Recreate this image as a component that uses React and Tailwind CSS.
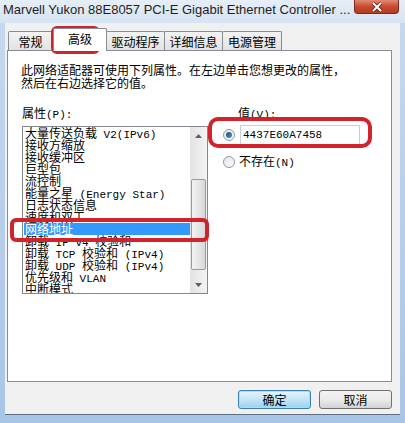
import React from "react"

const items = [
  "大量传送负载 V2(IPv6)",
  "接收方缩放",
  "接收缓冲区",
  "巨型包",
  "流控制",
  "能量之星 (Energy Star)",
  "日志状态信息",
  "速度和双工",
  "网络地址",
  "卸载 IP v4 校验和",
  "卸载 TCP 校验和 (IPv4)",
  "卸载 UDP 校验和 (IPv4)",
  "优先级和 VLAN",
  "中断模式",
]

// ascii runs get the narrow mono face, like SimSun's half-width latin
function Mixed({ text }) {
  return text.split(/([\x20-\x7e]+)/).map((part, i) =>
    /^[\x20-\x7e]+$/.test(part) ? (
      <span key={i} className="font-['Liberation_Mono',monospace] text-[11px] whitespace-pre">
        {part}
      </span>
    ) : (
      <span key={i}>{part}</span>
    )
  )
}

function Tab({ label, width, selected }) {
  if (selected) {
    return (
      <div
        className="h-[23px] -mb-px relative z-10 flex items-center justify-center bg-white border border-b-0 border-[#898c95] rounded-t-[2px]"
        style={{ width }}
      >
        <span className="-mt-[3px]">{label}</span>
      </div>
    )
  }
  return (
    <div
      className="h-[19px] -ml-px first:ml-0 flex items-center justify-center bg-gradient-to-b from-[#f3f3f3] to-[#e2e2e2] border border-b-0 border-[#898c95] rounded-t-[2px]"
      style={{ width }}
    >
      {label}
    </div>
  )
}

function Radio({ checked }) {
  return (
    <div className="w-[12px] h-[12px] rounded-full border border-[#8d9aa8] bg-gradient-to-br from-[#e6e6e6] to-[#fbfbfb] flex items-center justify-center">
      {checked && <div className="w-[6px] h-[6px] rounded-full bg-gradient-to-br from-[#1b4c75] to-[#4f94c9]" />}
    </div>
  )
}

function Arrow({ up }) {
  return (
    <svg width="7" height="4" viewBox="0 0 7 4">
      <path d={up ? "M0 4 L3.5 0 L7 4 Z" : "M0 0 L3.5 4 L7 0 Z"} fill="#606060" />
    </svg>
  )
}

export default function App() {
  return (
    <div className="w-[405px] h-[423px] overflow-hidden relative bg-gradient-to-b from-[#c7d9ee] to-[#a9c5e6] font-['Noto_Sans_CJK_SC',sans-serif] text-[12px] text-black leading-[13px]">
      {/* Title bar */}
      <div className="h-[23px] flex items-start bg-gradient-to-b from-[#e6eef7] to-[#d6e3f1]">
        <div className="pl-[3px] pt-[3px] font-['Liberation_Sans',sans-serif] text-[13px] leading-[14px] text-[#1e1e1e] whitespace-nowrap">
          Marvell Yukon 88E8057 PCI-E Gigabit Ethernet Controller ...
        </div>
        <div className="ml-auto mr-[6px] w-[45px] h-[14px] rounded-b-[4px] border border-t-0 border-[#7a2a1e] bg-gradient-to-b from-[#e28a73] via-[#c84a30] to-[#b43a22] flex items-center justify-center">
          <svg width="12" height="10" viewBox="0 0 12 10">
            <path d="M2 1 L10 9 M10 1 L2 9" stroke="#5a1a10" strokeWidth="3.5" />
            <path d="M2 1 L10 9 M10 1 L2 9" stroke="#ffffff" strokeWidth="2" />
          </svg>
        </div>
      </div>

      {/* Dialog body */}
      <div className="mx-[5px] h-[392px] bg-[#f0f0f0] border-b border-[#5f6f82] flex flex-col">
        {/* Tabs */}
        <div className="h-[27px] flex items-end pl-[3px]">
          <Tab label="常规" width={45} />
          <Tab label="高级" width={54} selected />
          <Tab label="驱动程序" width={59} />
          <Tab label="详细信息" width={59} />
          <Tab label="电源管理" width={60} />
        </div>

        {/* Panel */}
        <div className="ml-[2px] w-[385px] h-[332px] border border-[#898c95] bg-white pt-[12px]">
          <div className="pl-[13px] leading-[13px]">
            <div>此网络适配器可使用下列属性。在左边单击您想更改的属性，</div>
            <div>然后在右边选择它的值。</div>
          </div>

          <div className="flex mt-[17px]">
            {/* Property list */}
            <div className="ml-[14px] w-[186px]">
              <div>
                属性<Mixed text="(P):" />
              </div>
              <div className="mt-[4px] h-[168px] border border-[#828790] flex">
                <div className="flex-1 pl-[1px] overflow-hidden">
                  {items.map((item, i) => (
                    <div
                      key={item}
                      className={
                        "h-[12px] leading-[12px] px-[1px] whitespace-nowrap " +
                        (i === 8 ? "bg-[#3399ff] text-white" : "")
                      }
                    >
                      <Mixed text={item} />
                    </div>
                  ))}
                </div>
                <div className="w-[17px] bg-gradient-to-r from-[#e3e3e3] to-[#f3f3f3] flex flex-col">
                  <div className="h-[17px] flex items-center justify-center">
                    <Arrow up />
                  </div>
                  <div className="flex-1">
                    <div className="mt-[35px] h-[91px] mx-[1px] rounded-[2px] border border-[#9a9a9a] bg-gradient-to-r from-[#f3f3f3] to-[#d8d8d8]" />
                  </div>
                  <div className="h-[17px] flex items-center justify-center">
                    <Arrow />
                  </div>
                </div>
              </div>
            </div>

            {/* Value */}
            <div className="ml-[15px] flex flex-col">
              <div className="pl-[15px]">
                值<Mixed text="(V):" />
              </div>
              <div className="mt-[3px] flex items-center">
                <Radio checked />
                <div className="ml-[5px] w-[120px] h-[20px] border border-[#c9ced6] flex items-center pl-[2px] font-['Liberation_Mono',monospace] text-[11px]">
                  4437E60A7458
                </div>
              </div>
              <div className="mt-[9px] flex items-center">
                <Radio />
                <span className="ml-[4px]">
                  不存在<Mixed text="(N)" />
                </span>
              </div>
            </div>
          </div>
        </div>

        {/* Buttons */}
        <div className="mt-[8px] flex justify-end gap-[8px] pr-[8px]">
          <button className="w-[73px] h-[19px] rounded-[3px] border border-[#3c7fb1] bg-gradient-to-b from-[#e5f4fc] via-[#c4e5f6] to-[#98d1ef] shadow-[inset_0_0_0_1px_#a6e0f8] flex items-center justify-center">
            确定
          </button>
          <button className="w-[73px] h-[19px] rounded-[3px] border border-[#707070] bg-gradient-to-b from-[#f2f2f2] via-[#ebebeb] to-[#d2d2d2] flex items-center justify-center">
            取消
          </button>
        </div>
      </div>

      {/* Red annotations */}
      <div className="absolute left-[51px] top-[26px] w-[49px] h-[28px] border-[4px] border-[#d0232b] rounded-[6px]" />
      <div className="absolute left-[208px] top-[117px] w-[164px] h-[31px] border-[4px] border-[#d0232b] rounded-[10px]" />
      <div className="absolute left-[10px] top-[218px] w-[199px] h-[24px] border-[4px] border-[#d0232b] rounded-[6px]" />
    </div>
  )
}
